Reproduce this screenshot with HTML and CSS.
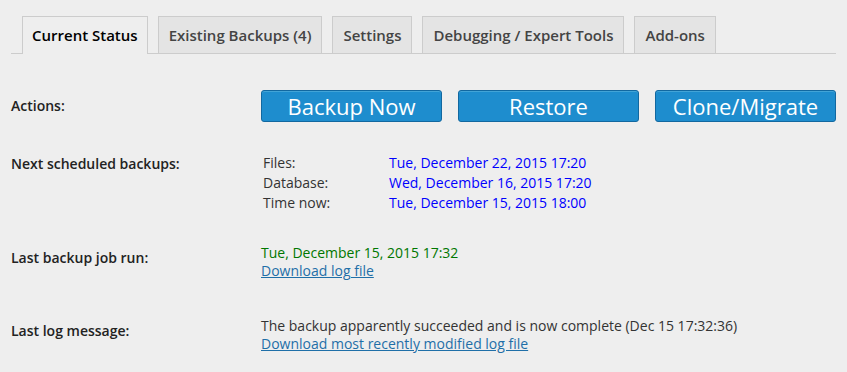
FILE: index.html
```html
<!DOCTYPE html>
<html lang="en">
<head>
    <meta charset="UTF-8">
    <title>UpdraftPlus Backup/Restore</title>
    <link rel="stylesheet" href="styles.css">
</head>
<body>
    <div class="wrap">
        <nav class="nav-tabs">
            <a class="nav-tab active" href="#">Current Status</a>
            <a class="nav-tab" href="#">Existing Backups (4)</a>
            <a class="nav-tab" href="#">Settings</a>
            <a class="nav-tab" href="#">Debugging / Expert Tools</a>
            <a class="nav-tab" href="#">Add-ons</a>
        </nav>

        <div class="status-table">
            <div class="row row-actions">
                <div class="row-label">Actions:</div>
                <div class="actions">
                    <button class="btn-primary">Backup Now</button>
                    <button class="btn-primary">Restore</button>
                    <button class="btn-primary">Clone/Migrate</button>
                </div>
            </div>

            <div class="row row-schedule">
                <div class="row-label">Next scheduled backups:</div>
                <div class="schedule">
                    <span>Files:</span>
                    <span class="sched-date">Tue, December 22, 2015 17:20</span>
                    <span>Database:</span>
                    <span class="sched-date">Wed, December 16, 2015 17:20</span>
                    <span>Time now:</span>
                    <span class="sched-date">Tue, December 15, 2015 18:00</span>
                </div>
            </div>

            <div class="row row-lastjob">
                <div class="row-label">Last backup job run:</div>
                <div class="row-value">
                    <div class="last-date">Tue, December 15, 2015 17:32</div>
                    <a href="#">Download log file</a>
                </div>
            </div>

            <div class="row row-log">
                <div class="row-label">Last log message:</div>
                <div class="row-value">
                    <div>The backup apparently succeeded and is now complete (Dec 15 17:32:36)</div>
                    <a href="#">Download most recently modified log file</a>
                </div>
            </div>
        </div>
    </div>
</body>
</html>
```

FILE: styles.css
```css
body {
    margin: 0;
    background-color: #eeeeee;
    font-family: "Open Sans", Arial, sans-serif;
    font-size: 14px;
    color: #333;
}
.wrap {
    padding: 16px 11px 0 11px;
}
.nav-tabs {
    display: flex;
    padding-left: 11px;
    border-bottom: 1px solid #ccc;
}
.nav-tab {
    display: block;
    margin-right: 10px;
    margin-bottom: -1px;
    padding: 0 10px;
    height: 36px;
    line-height: 36px;
    border: 1px solid #ccc;
    border-bottom: none;
    background: #e4e4e4;
    color: #444;
    font-size: 15px;
    font-weight: 600;
    text-decoration: none;
    white-space: nowrap;
}
.nav-tab.active {
    padding: 0 9px;
    background: #eeeeee;
    color: #000;
    height: 37px;
}
.status-table {
    display: flex;
    flex-direction: column;
}
.row {
    display: grid;
    grid-template-columns: 250px 1fr;
    align-items: start;
}
.row-label {
    font-weight: 600;
    color: #222;
    line-height: 18px;
}
.row-actions {
    margin-top: 36px;
    align-items: center;
}
.actions {
    display: flex;
    gap: 16px;
}
.btn-primary {
    width: 181px;
    height: 32px;
    padding: 0;
    border: 1px solid #1268a0;
    border-radius: 3px;
    background: #1e8dce;
    color: #fff;
    font-family: "Open Sans", Arial, sans-serif;
    font-size: 22px;
    line-height: 30px;
    box-shadow: inset 0 1px 0 rgba(120, 200, 230, 0.4);
    cursor: pointer;
}
.row-schedule {
    margin-top: 31px;
}
.row-schedule .row-label {
    margin-top: 2px;
}
.schedule {
    display: grid;
    grid-template-columns: 126px auto;
    padding-left: 2px;
    line-height: 20px;
}
.sched-date {
    color: #0000ff;
}
.row-value {
    line-height: 18px;
}
.row-lastjob {
    margin-top: 31px;
}
.row-lastjob .row-label,
.row-log .row-label {
    margin-top: 5px;
}
.row-log {
    margin-top: 37px;
}
.last-date {
    color: #007700;
}
.row-value a {
    color: #1f6fa8;
    text-decoration: underline;
}
```
